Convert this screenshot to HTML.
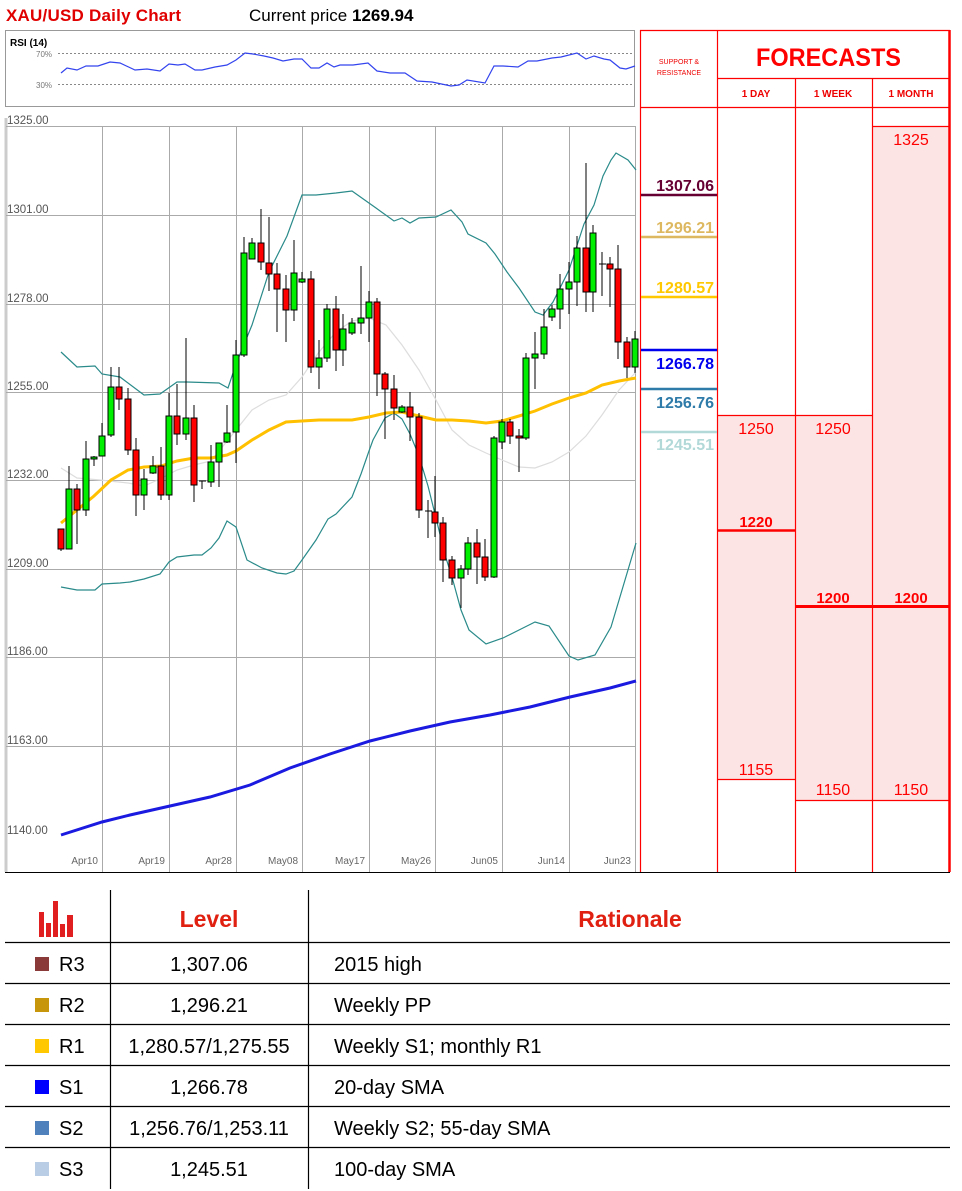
<!DOCTYPE html>
<html><head><meta charset="utf-8"><style>
body{margin:0;background:#fff;width:962px;height:1191px;overflow:hidden}
svg{display:block}
text{font-family:"Liberation Sans",sans-serif}
</style></head><body>
<svg width="962" height="1191" viewBox="0 0 962 1191" xmlns="http://www.w3.org/2000/svg">
<text x="6" y="21" font-size="17" font-weight="bold" fill="#e00000" textLength="175">XAU/USD Daily Chart</text>
<text x="249" y="21" font-size="17" fill="#000">Current price <tspan font-weight="bold">1269.94</tspan></text>

<rect x="5.5" y="30.5" width="629" height="76" fill="#fff" stroke="#999"/>
<text x="10" y="46" font-size="10" font-weight="bold" fill="#000">RSI (14)</text>
<text x="36" y="57" font-size="8" fill="#777">70%</text>
<text x="36" y="88" font-size="8" fill="#777">30%</text>
<line x1="58" y1="53.5" x2="634" y2="53.5" stroke="#888" stroke-dasharray="2,2"/>
<line x1="58" y1="84.5" x2="634" y2="84.5" stroke="#888" stroke-dasharray="2,2"/>
<polyline fill="none" stroke="#3344ee" stroke-width="1.2" points="61,73 67,68 77,70 86,66 98,66 110,62 120,63 135,70 147,69 160,71 169,64 178,65 185,64 195,70 202,70 215,67 227,65 236,60 245,53 253,54 264,56 273,58 283,61 294,59 302,59 311,68 319,68 327,63 334,67 340,65 353,65 368,63 377,71 390,73 405,73 417,81 432,82 451,86 459,85 467,80 485,83 494,66 503,66 518,67 528,61 537,61 552,58 561,57 577,53 586,59 594,56 604,59 610,60 620,68 626,69 635,66"/>

<line x1="6" y1="118" x2="6" y2="872" stroke="#ccc" stroke-width="3"/>
<g stroke="#aaa" stroke-width="1">
<line x1="6" y1="126.5" x2="636" y2="126.5"/>
<line x1="6" y1="215.5" x2="636" y2="215.5"/>
<line x1="6" y1="304.5" x2="636" y2="304.5"/>
<line x1="6" y1="392.5" x2="636" y2="392.5"/>
<line x1="6" y1="480.5" x2="636" y2="480.5"/>
<line x1="6" y1="569.5" x2="636" y2="569.5"/>
<line x1="6" y1="657.5" x2="636" y2="657.5"/>
<line x1="6" y1="746.5" x2="636" y2="746.5"/>
<line x1="102.5" y1="126" x2="102.5" y2="872"/>
<line x1="169.5" y1="126" x2="169.5" y2="872"/>
<line x1="236.5" y1="126" x2="236.5" y2="872"/>
<line x1="302.5" y1="126" x2="302.5" y2="872"/>
<line x1="369.5" y1="126" x2="369.5" y2="872"/>
<line x1="435.5" y1="126" x2="435.5" y2="872"/>
<line x1="502.5" y1="126" x2="502.5" y2="872"/>
<line x1="569.5" y1="126" x2="569.5" y2="872"/>
<line x1="635.5" y1="126" x2="635.5" y2="872"/>
</g>
<g font-size="11.5" fill="#555">
<text x="7" y="124">1325.00</text>
<text x="7" y="213">1301.00</text>
<text x="7" y="302">1278.00</text>
<text x="7" y="390">1255.00</text>
<text x="7" y="478">1232.00</text>
<text x="7" y="567">1209.00</text>
<text x="7" y="655">1186.00</text>
<text x="7" y="744">1163.00</text>
<text x="7" y="834">1140.00</text>
</g>
<g font-size="10" fill="#666" text-anchor="end">
<text x="98" y="864">Apr10</text>
<text x="165" y="864">Apr19</text>
<text x="232" y="864">Apr28</text>
<text x="298" y="864">May08</text>
<text x="365" y="864">May17</text>
<text x="431" y="864">May26</text>
<text x="498" y="864">Jun05</text>
<text x="565" y="864">Jun14</text>
<text x="631" y="864">Jun23</text>
</g>

<polyline fill="none" stroke="#ddd" stroke-width="1.2" points="61,468 77,478 100,480 128,483 144,486 160,479 177,470 194,465 211,461 236,430 252,410 269,400 286,395 302,377 319,352 336,332 352,321 369,318 386,325 402,345 419,370 436,400 452,430 469,445 486,453 502,460 519,467 535,468 552,462 569,452 586,436 602,415 619,390 636,372"/>
<polyline fill="none" stroke="#2a8a8a" stroke-width="1.2" points="61,352 77,367 95,366 102,374 120,377 144,395 160,394 177,382 187,382 219,383 228,388 236,364 252,325 269,272 287,236 302,195 316,195 336,193 352,191 376,208 394,221 402,218 410,223 419,218 436,217 451,210 462,222 468,234 486,243 495,254 507,272 519,288 535,312 543,315 553,302 569,270 584,224 594,205 603,176 611,160 616,153 628,160 636,170"/>
<polyline fill="none" stroke="#2a8a8a" stroke-width="1.2" points="61,587 77,590 95,590 102,584 120,583 130,582 144,579 160,574 169,562 177,557 194,555 202,555 211,548 219,538 227,521 236,527 247,560 262,568 277,573 286,574 294,571 302,560 316,540 328,519 336,514 352,497 361,474 369,451 373,440 385,418 394,413 402,419 410,434 419,456 428,486 436,518 445,555 452,577 461,610 469,630 486,644 503,638 527,626 535,622 549,626 569,656 578,660 595,655 611,627 636,543"/>
<polyline fill="none" stroke="#ffc000" stroke-width="3" points="61,523 77,510 94,496 111,480 128,470 144,467 161,466 177,461 194,458 211,458 227,455 236,451 252,440 269,430 286,422 302,421 319,420 336,420 352,420 369,417 386,413 402,412 419,416 436,420 452,420 469,421 486,423 502,421 519,416 535,411 552,404 569,398 586,393 602,385 619,381 636,378"/>
<polyline fill="none" stroke="#1a1ae0" stroke-width="3" points="61,835 102,822 130,815 170,806 210,797 250,785 290,768 330,754 370,741 410,731 450,722 490,715 530,707 570,697 610,688 636,681"/>

<g stroke="#000" stroke-width="1">
<line x1="61" y1="529" x2="61" y2="551"/><rect x="58" y="529" width="6" height="20" fill="#f00"/>
<line x1="69" y1="466" x2="69" y2="549"/><rect x="66" y="489" width="6" height="60" fill="#0e0"/>
<line x1="77" y1="484" x2="77" y2="544"/><rect x="74" y="489" width="6" height="21" fill="#f00"/>
<line x1="86" y1="441" x2="86" y2="516"/><rect x="83" y="459" width="6" height="51" fill="#0e0"/>
<line x1="94" y1="456" x2="94" y2="466"/><rect x="91" y="457" width="6" height="2" fill="#0e0"/>
<line x1="102" y1="423" x2="102" y2="456"/><rect x="99" y="436" width="6" height="20" fill="#0e0"/>
<line x1="111" y1="367" x2="111" y2="437"/><rect x="108" y="387" width="6" height="48" fill="#0e0"/>
<line x1="119" y1="367" x2="119" y2="410"/><rect x="116" y="387" width="6" height="12" fill="#f00"/>
<line x1="128" y1="388" x2="128" y2="455"/><rect x="125" y="399" width="6" height="51" fill="#f00"/>
<line x1="136" y1="438" x2="136" y2="516"/><rect x="133" y="450" width="6" height="45" fill="#f00"/>
<line x1="144" y1="469" x2="144" y2="510"/><rect x="141" y="479" width="6" height="16" fill="#0e0"/>
<line x1="153" y1="456" x2="153" y2="474"/><rect x="150" y="466" width="6" height="7" fill="#0e0"/>
<line x1="161" y1="447" x2="161" y2="500"/><rect x="158" y="466" width="6" height="29" fill="#f00"/>
<line x1="169" y1="393" x2="169" y2="500"/><rect x="166" y="416" width="6" height="79" fill="#0e0"/>
<line x1="177" y1="384" x2="177" y2="445"/><rect x="174" y="416" width="6" height="18" fill="#f00"/>
<line x1="186" y1="338" x2="186" y2="440"/><rect x="183" y="418" width="6" height="16" fill="#0e0"/>
<line x1="194" y1="405" x2="194" y2="502"/><rect x="191" y="418" width="6" height="67" fill="#f00"/>
<line x1="202" y1="481" x2="202" y2="489"/><line x1="199" y1="481" x2="206" y2="481"/>
<line x1="211" y1="445" x2="211" y2="487"/><rect x="208" y="462" width="6" height="20" fill="#0e0"/>
<line x1="219" y1="445" x2="219" y2="487"/><rect x="216" y="443" width="6" height="19" fill="#0e0"/>
<line x1="227" y1="405" x2="227" y2="443"/><rect x="224" y="433" width="6" height="9" fill="#0e0"/>
<line x1="236" y1="340" x2="236" y2="463"/><rect x="233" y="355" width="6" height="77" fill="#0e0"/>
<line x1="244" y1="237" x2="244" y2="357"/><rect x="241" y="253" width="6" height="102" fill="#0e0"/>
<line x1="252" y1="238" x2="252" y2="259"/><rect x="249" y="243" width="6" height="16" fill="#0e0"/>
<line x1="261" y1="209" x2="261" y2="270"/><rect x="258" y="243" width="6" height="19" fill="#f00"/>
<line x1="269" y1="217" x2="269" y2="291"/><rect x="266" y="263" width="6" height="11" fill="#f00"/>
<line x1="277" y1="263" x2="277" y2="332"/><rect x="274" y="274" width="6" height="15" fill="#f00"/>
<line x1="286" y1="275" x2="286" y2="342"/><rect x="283" y="289" width="6" height="21" fill="#f00"/>
<line x1="294" y1="240" x2="294" y2="321"/><rect x="291" y="273" width="6" height="37" fill="#0e0"/>
<line x1="302" y1="272" x2="302" y2="283"/><rect x="299" y="279" width="6" height="3" fill="#0e0"/>
<line x1="311" y1="271" x2="311" y2="373"/><rect x="308" y="279" width="6" height="88" fill="#f00"/>
<line x1="319" y1="340" x2="319" y2="389"/><rect x="316" y="358" width="6" height="9" fill="#0e0"/>
<line x1="327" y1="304" x2="327" y2="362"/><rect x="324" y="309" width="6" height="49" fill="#0e0"/>
<line x1="336" y1="296" x2="336" y2="371"/><rect x="333" y="309" width="6" height="41" fill="#f00"/>
<line x1="343" y1="314" x2="343" y2="366"/><rect x="340" y="329" width="6" height="21" fill="#0e0"/>
<line x1="352" y1="318" x2="352" y2="335"/><rect x="349" y="323" width="6" height="10" fill="#0e0"/>
<line x1="361" y1="266" x2="361" y2="334"/><rect x="358" y="318" width="6" height="5" fill="#0e0"/>
<line x1="369" y1="291" x2="369" y2="342"/><rect x="366" y="302" width="6" height="16" fill="#0e0"/>
<line x1="377" y1="298" x2="377" y2="396"/><rect x="374" y="302" width="6" height="72" fill="#f00"/>
<line x1="385" y1="372" x2="385" y2="439"/><rect x="382" y="374" width="6" height="15" fill="#f00"/>
<line x1="394" y1="375" x2="394" y2="420"/><rect x="391" y="389" width="6" height="19" fill="#f00"/>
<line x1="402" y1="405" x2="402" y2="413"/><rect x="399" y="407" width="6" height="5" fill="#0e0"/>
<line x1="410" y1="392" x2="410" y2="441"/><rect x="407" y="407" width="6" height="10" fill="#f00"/>
<line x1="419" y1="413" x2="419" y2="518"/><rect x="416" y="417" width="6" height="93" fill="#f00"/>
<line x1="428" y1="500" x2="428" y2="538"/><line x1="425" y1="511" x2="432" y2="511"/>
<line x1="435" y1="476" x2="435" y2="537"/><rect x="432" y="512" width="6" height="11" fill="#f00"/>
<line x1="443" y1="517" x2="443" y2="582"/><rect x="440" y="523" width="6" height="37" fill="#f00"/>
<line x1="452" y1="556" x2="452" y2="585"/><rect x="449" y="560" width="6" height="18" fill="#f00"/>
<line x1="461" y1="565" x2="461" y2="608"/><rect x="458" y="569" width="6" height="9" fill="#0e0"/>
<line x1="468" y1="537" x2="468" y2="575"/><rect x="465" y="543" width="6" height="26" fill="#0e0"/>
<line x1="477" y1="529" x2="477" y2="584"/><rect x="474" y="543" width="6" height="14" fill="#f00"/>
<line x1="485" y1="539" x2="485" y2="581"/><rect x="482" y="557" width="6" height="20" fill="#f00"/>
<line x1="494" y1="436" x2="494" y2="578"/><rect x="491" y="438" width="6" height="139" fill="#0e0"/>
<line x1="502" y1="419" x2="502" y2="449"/><rect x="499" y="422" width="6" height="20" fill="#0e0"/>
<line x1="510" y1="419" x2="510" y2="444"/><rect x="507" y="422" width="6" height="14" fill="#f00"/>
<line x1="519" y1="429" x2="519" y2="472"/><rect x="516" y="436" width="6" height="2" fill="#f00"/>
<line x1="526" y1="353" x2="526" y2="440"/><rect x="523" y="358" width="6" height="80" fill="#0e0"/>
<line x1="535" y1="332" x2="535" y2="389"/><rect x="532" y="354" width="6" height="4" fill="#0e0"/>
<line x1="544" y1="309" x2="544" y2="359"/><rect x="541" y="327" width="6" height="27" fill="#0e0"/>
<line x1="552" y1="305" x2="552" y2="321"/><rect x="549" y="309" width="6" height="8" fill="#0e0"/>
<line x1="560" y1="274" x2="560" y2="329"/><rect x="557" y="289" width="6" height="20" fill="#0e0"/>
<line x1="569" y1="262" x2="569" y2="314"/><rect x="566" y="282" width="6" height="7" fill="#0e0"/>
<line x1="577" y1="236" x2="577" y2="306"/><rect x="574" y="248" width="6" height="34" fill="#0e0"/>
<line x1="586" y1="163" x2="586" y2="312"/><rect x="583" y="248" width="6" height="44" fill="#f00"/>
<line x1="593" y1="225" x2="593" y2="312"/><rect x="590" y="233" width="6" height="59" fill="#0e0"/>
<line x1="602" y1="252" x2="602" y2="296"/><line x1="599" y1="264" x2="606" y2="264"/>
<line x1="610" y1="257" x2="610" y2="307"/><rect x="607" y="264" width="6" height="5" fill="#f00"/>
<line x1="618" y1="245" x2="618" y2="359"/><rect x="615" y="269" width="6" height="73" fill="#f00"/>
<line x1="627" y1="337" x2="627" y2="378"/><rect x="624" y="342" width="6" height="25" fill="#f00"/>
<line x1="635" y1="331" x2="635" y2="373"/><rect x="632" y="339" width="6" height="28" fill="#0e0"/>
</g>

<rect x="718" y="415" width="77" height="364" fill="#fde4e4"/>
<rect x="795" y="415" width="77" height="385" fill="#fde4e4"/>
<rect x="872" y="126" width="78" height="674" fill="#fde4e4"/>
<g stroke="#f00" stroke-width="1.2" fill="none">
<line x1="640.5" y1="30" x2="640.5" y2="872"/>
<line x1="640" y1="30.5" x2="950" y2="30.5"/>
<line x1="717.5" y1="30" x2="717.5" y2="872"/>
<line x1="717" y1="78.5" x2="950" y2="78.5"/>
<line x1="640" y1="107.5" x2="950" y2="107.5"/>
<line x1="795.5" y1="78" x2="795.5" y2="872"/>
<line x1="872.5" y1="78" x2="872.5" y2="872"/>
<line x1="872" y1="126.5" x2="950" y2="126.5"/>
<line x1="717" y1="415.5" x2="872" y2="415.5"/>
<line x1="717" y1="779.5" x2="795" y2="779.5"/>
<line x1="795" y1="800.5" x2="950" y2="800.5"/>
</g>
<line x1="949.5" y1="30" x2="949.5" y2="872" stroke="#f00" stroke-width="2.5"/>
<line x1="717" y1="530.5" x2="795" y2="530.5" stroke="#f00" stroke-width="2.5"/>
<line x1="795" y1="606.5" x2="950" y2="606.5" stroke="#f00" stroke-width="3"/>
<text x="679" y="64" font-size="7" fill="#e00" text-anchor="middle">SUPPORT &amp;</text>
<text x="679" y="75" font-size="7" fill="#e00" text-anchor="middle">RESISTANCE</text>
<text x="756" y="66" font-size="25" font-weight="bold" fill="#f00" textLength="145" lengthAdjust="spacingAndGlyphs">FORECASTS</text>
<g font-size="10" font-weight="bold" fill="#e00" text-anchor="middle">
<text x="756" y="97">1 DAY</text><text x="833" y="97">1 WEEK</text><text x="911" y="97">1 MONTH</text>
</g>
<g font-size="16" fill="#f00" text-anchor="middle">
<text x="911" y="145" font-family="Liberation Serif,serif">1325</text>
<text x="756" y="434" font-family="Liberation Serif,serif">1250</text>
<text x="833" y="434" font-family="Liberation Serif,serif">1250</text>
<text x="756" y="775" font-family="Liberation Serif,serif">1155</text>
<text x="833" y="795" font-family="Liberation Serif,serif">1150</text>
<text x="911" y="795" font-family="Liberation Serif,serif">1150</text>
</g>
<g font-size="15" font-weight="bold" fill="#f00" text-anchor="middle">
<text x="756" y="527">1220</text><text x="833" y="603">1200</text><text x="911" y="603">1200</text>
</g>
<line x1="641" y1="195" x2="717" y2="195" stroke="#660033" stroke-width="2.5"/>
<line x1="641" y1="237" x2="717" y2="237" stroke="#ddb860" stroke-width="2.5"/>
<line x1="641" y1="297" x2="717" y2="297" stroke="#ffc800" stroke-width="2.5"/>
<line x1="641" y1="350" x2="717" y2="350" stroke="#0000ee" stroke-width="2.5"/>
<line x1="641" y1="389" x2="717" y2="389" stroke="#2e7aa8" stroke-width="2.5"/>
<line x1="641" y1="432" x2="717" y2="432" stroke="#b2d8d8" stroke-width="2.5"/>
<g font-size="16" font-weight="bold" text-anchor="end">
<text x="714" y="191" fill="#660033">1307.06</text>
<text x="714" y="233" fill="#ddb860">1296.21</text>
<text x="714" y="293" fill="#ffc800">1280.57</text>
<text x="714" y="369" fill="#0000ee">1266.78</text>
<text x="714" y="408" fill="#2e7aa8">1256.76</text>
<text x="714" y="450" fill="#b2d8d8">1245.51</text>
</g>
<line x1="5" y1="872.5" x2="950" y2="872.5" stroke="#000"/>

<g fill="#e02020">
<rect x="39" y="922" width="5" height="15"/>
<rect x="46" y="923" width="5" height="14"/><rect x="53" y="901" width="5" height="36"/>
<rect x="60" y="924" width="5" height="13"/><rect x="67" y="915" width="6" height="22"/>
<rect x="39" y="912" width="5" height="10"/>
</g>
<text x="209" y="927" font-size="23" font-weight="bold" fill="#e02010" text-anchor="middle">Level</text>
<text x="630" y="927" font-size="23" font-weight="bold" fill="#e02010" text-anchor="middle">Rationale</text>
<g stroke="#000" stroke-width="1.2">
<line x1="110.5" y1="890" x2="110.5" y2="1189"/>
<line x1="308.5" y1="890" x2="308.5" y2="1189"/>
<line x1="5" y1="942.5" x2="950" y2="942.5"/>
<line x1="5" y1="983.5" x2="950" y2="983.5"/>
<line x1="5" y1="1024.5" x2="950" y2="1024.5"/>
<line x1="5" y1="1065.5" x2="950" y2="1065.5"/>
<line x1="5" y1="1106.5" x2="950" y2="1106.5"/>
<line x1="5" y1="1147.5" x2="950" y2="1147.5"/>
</g>
<rect x="35" y="957" width="14" height="14" fill="#8b3a3a"/>
<rect x="35" y="998" width="14" height="14" fill="#c8960a"/>
<rect x="35" y="1039" width="14" height="14" fill="#ffc800"/>
<rect x="35" y="1080" width="14" height="14" fill="#0000ff"/>
<rect x="35" y="1121" width="14" height="14" fill="#4f81bd"/>
<rect x="35" y="1162" width="14" height="14" fill="#b9cde5"/>
<g font-size="20" fill="#000">
<text x="59" y="971">R3</text><text x="59" y="1012">R2</text><text x="59" y="1053">R1</text>
<text x="59" y="1094">S1</text><text x="59" y="1135">S2</text><text x="59" y="1176">S3</text>
<text x="334" y="971">2015 high</text>
<text x="334" y="1012">Weekly PP</text>
<text x="334" y="1053">Weekly S1; monthly R1</text>
<text x="334" y="1094">20-day SMA</text>
<text x="334" y="1135">Weekly S2; 55-day SMA</text>
<text x="334" y="1176">100-day SMA</text>
</g>
<g font-size="20" fill="#000" text-anchor="middle">
<text x="209" y="971">1,307.06</text><text x="209" y="1012">1,296.21</text>
<text x="209" y="1053">1,280.57/1,275.55</text><text x="209" y="1094">1,266.78</text>
<text x="209" y="1135">1,256.76/1,253.11</text><text x="209" y="1176">1,245.51</text>
</g>
</svg>
</body></html>
